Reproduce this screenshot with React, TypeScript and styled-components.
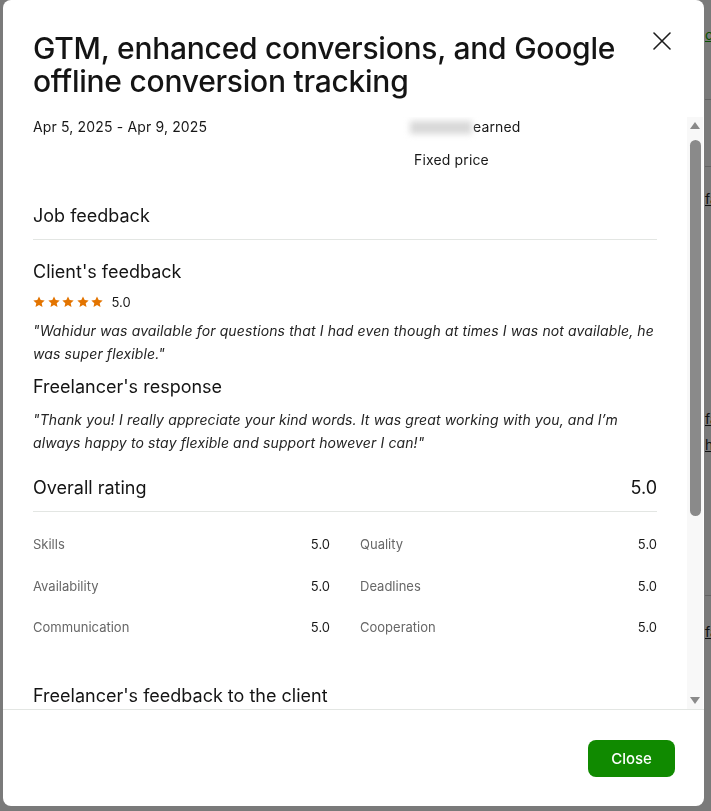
import React from "react";
import styled, { createGlobalStyle } from "styled-components";

const FONT = `Inter, "Liberation Sans", Arial, sans-serif`;

const GlobalStyle = createGlobalStyle`
  html, body { margin: 0; padding: 0; }
  body {
    background: #ffffff;
    font-family: ${FONT};
    color: #141414;
    -webkit-font-smoothing: antialiased;
  }
  * { box-sizing: border-box; }
`;

/* ---------- page behind the dialog ---------- */
const BackPage = styled.div`
  height: 811px;
  padding-left: 705px;
  display: flex;
  flex-direction: column;
  font-family: ${FONT};
  font-size: 14px;
  overflow: hidden;
`;

const BackLink = styled.a<{ $top: number; $green?: boolean }>`
  display: block;
  margin-top: ${(p) => p.$top}px;
  line-height: 20px;
  color: ${(p) => (p.$green ? "#14a800" : "#222")};
  text-decoration: underline;
  white-space: nowrap;
`;

const BackRule = styled.div<{ $top: number }>`
  margin-top: ${(p) => p.$top}px;
  height: 1px;
  background: #d0d0d0;
`;

/* ---------- overlay + dialog ---------- */
const Overlay = styled.div`
  position: fixed;
  inset: 0;
  background: rgba(0, 0, 0, 0.52);
  display: flex;
  align-items: flex-start;
  padding-left: 3px;
`;

const Dialog = styled.div`
  width: 701px;
  height: 806px;
  background: #ffffff;
  border-radius: 8px;
  display: flex;
  flex-direction: column;
  overflow: hidden;
  font-family: ${FONT};
`;

const Header = styled.div`
  display: flex;
  align-items: flex-start;
  gap: 10px;
  padding: 32px 30px 19px 30px;
  height: 117px;
`;

const Title = styled.h2`
  flex: 1;
  margin: 0;
  font-size: 30px;
  line-height: 33px;
  font-weight: 500;
  letter-spacing: -0.25px;
  color: #141414;
`;

const CloseIcon = styled.button`
  width: 24px;
  height: 24px;
  margin-top: -3px;
  padding: 0;
  border: 0;
  background: transparent;
  color: #1c1c1c;
  display: flex;
  align-items: center;
  justify-content: center;
  cursor: pointer;
`;

const Body = styled.div`
  flex: 1;
  min-height: 0;
  display: flex;
`;

const Content = styled.div`
  flex: 1;
  min-width: 0;
  overflow: hidden;
  padding: 0 30px;
`;

const Track = styled.div`
  width: 16px;
  margin-right: 1px;
  background: #f8f8f8;
  display: flex;
  flex-direction: column;
  align-items: center;
`;

const Arrow = styled.div<{ $down?: boolean }>`
  height: 17px;
  width: 16px;
  display: flex;
  align-items: center;
  justify-content: center;
  &::before {
    content: "";
    width: 0;
    height: 0;
    border-left: 5.5px solid transparent;
    border-right: 5.5px solid transparent;
    ${(p) =>
      p.$down
        ? "border-top: 7px solid #8a8a8a;"
        : "border-bottom: 7px solid #8a8a8a;"}
  }
`;

const Thumb = styled.div`
  width: 11px;
  height: 376px;
  margin-top: 6px;
  border-radius: 6px;
  background: #8a8a8a;
`;

const Spacer = styled.div`
  flex: 1;
`;

const MetaRow = styled.div`
  display: grid;
  grid-template-columns: 381px 1fr;
  font-size: 14px;
  line-height: 20px;
  letter-spacing: 0.15px;
  color: #181818;
`;

const MetaCol = styled.div`
  display: flex;
  flex-direction: column;
  gap: 13px;
`;

const Blurred = styled.span`
  display: inline-block;
  width: 62px;
  height: 13px;
  margin-left: -4px;
  margin-right: 1px;
  vertical-align: -2px;
  background: #d8d8d8;
  filter: blur(3px);
`;

const Heading = styled.h3<{ $top: number }>`
  margin: ${(p) => p.$top}px 0 0 0;
  font-size: 18px;
  line-height: 24px;
  font-weight: 400;
  color: #141414;
`;

const Divider = styled.hr<{ $top: number }>`
  margin: ${(p) => p.$top}px 0 0 0;
  border: 0;
  height: 1px;
  background: #e3e6e3;
`;

const StarsRow = styled.div`
  margin-top: 9px;
  height: 18px;
  display: flex;
  align-items: center;
  gap: 2.5px;
  font-size: 13px;
  color: #181818;
`;

const Score = styled.span`
  margin-left: 6px;
`;

const Quote = styled.p<{ $top: number }>`
  margin: ${(p) => p.$top}px 0 0 0;
  font-size: 14px;
  line-height: 23px;
  font-style: italic;
  letter-spacing: 0.12px;
  color: #242424;
`;

const RatingHead = styled.div`
  margin-top: 22px;
  display: flex;
  justify-content: space-between;
  font-size: 18px;
  line-height: 24px;
  font-weight: 400;
  color: #141414;
`;

const ScoreGrid = styled.div`
  margin-top: 22px;
  display: grid;
  grid-template-columns: 1fr 1fr;
  column-gap: 30px;
  row-gap: 21.5px;
`;

const ScoreCell = styled.div`
  display: flex;
  justify-content: space-between;
  font-size: 13px;
  line-height: 20px;
`;

const ScoreLabel = styled.span`
  color: #676767;
`;

const ScoreValue = styled.span`
  color: #181818;
`;

const Footer = styled.div`
  border-top: 1px solid #e3e6e3;
  padding: 30px 29px 29px 0;
  display: flex;
  justify-content: flex-end;
`;

const PrimaryButton = styled.button`
  width: 87px;
  height: 37px;
  border: 0;
  border-radius: 8px;
  background: #108a00;
  color: #ffffff;
  font-family: ${FONT};
  font-size: 15px;
  font-weight: 500;
  cursor: pointer;
`;

const Star = () => (
  <svg width="12" height="12" viewBox="0 0 24 24" aria-hidden="true">
    <path
      fill="#e37400"
      d="M12 0.8l3.4 7.2 7.9.9-5.9 5.4 1.6 7.9L12 18.2l-7 4 1.6-7.9L.7 8.9l7.9-.9z"
    />
  </svg>
);

const scores: [string, string][] = [
  ["Skills", "5.0"],
  ["Quality", "5.0"],
  ["Availability", "5.0"],
  ["Deadlines", "5.0"],
  ["Communication", "5.0"],
  ["Cooperation", "5.0"],
];

export default function App() {
  return (
    <>
      <GlobalStyle />
      <BackPage>
        <BackLink $top={25} $green>
          c
        </BackLink>
        <BackRule $top={54} />
        <BackRule $top={66} />
        <BackLink $top={22}>fa</BackLink>
        <BackLink $top={200}>fa</BackLink>
        <BackLink $top={6}>hi</BackLink>
        <BackRule $top={140} />
        <BackLink $top={26}>fa</BackLink>
      </BackPage>
      <Overlay>
        <Dialog role="dialog" aria-modal="true">
          <Header>
            <Title>GTM, enhanced conversions, and Google offline conversion tracking</Title>
            <CloseIcon aria-label="Close">
              <svg width="18" height="18" viewBox="0 0 18 18" aria-hidden="true">
                <path
                  d="M1 1L17 17M17 1L1 17"
                  stroke="currentColor"
                  strokeWidth="1.6"
                  strokeLinecap="round"
                />
              </svg>
            </CloseIcon>
          </Header>
          <Body>
            <Content>
              <MetaRow>
                <div>Apr 5, 2025 - Apr 9, 2025</div>
                <MetaCol>
                  <div>
                    <Blurred />
                    earned
                  </div>
                  <div>Fixed price</div>
                </MetaCol>
              </MetaRow>

              <Heading $top={34}>Job feedback</Heading>
              <Divider $top={11} />

              <Heading $top={20}>Client's feedback</Heading>
              <StarsRow>
                <Star />
                <Star />
                <Star />
                <Star />
                <Star />
                <Score>5.0</Score>
              </StarsRow>
              <Quote $top={8}>
                "Wahidur was available for questions that I had even though at times I was not
                available, he was super flexible."
              </Quote>

              <Heading $top={10}>Freelancer's response</Heading>
              <Quote $top={9}>
                "Thank you! I really appreciate your kind words. It was great working with you, and
                I’m always happy to stay flexible and support however I can!"
              </Quote>

              <RatingHead>
                <span>Overall rating</span>
                <span>5.0</span>
              </RatingHead>
              <Divider $top={11} />

              <ScoreGrid>
                {scores.map(([label, value]) => (
                  <ScoreCell key={label}>
                    <ScoreLabel>{label}</ScoreLabel>
                    <ScoreValue>{value}</ScoreValue>
                  </ScoreCell>
                ))}
              </ScoreGrid>

              <Heading $top={47}>Freelancer's feedback to the client</Heading>
            </Content>
            <Track>
              <Arrow />
              <Thumb />
              <Spacer />
              <Arrow $down />
            </Track>
          </Body>
          <Footer>
            <PrimaryButton>Close</PrimaryButton>
          </Footer>
        </Dialog>
      </Overlay>
    </>
  );
}
